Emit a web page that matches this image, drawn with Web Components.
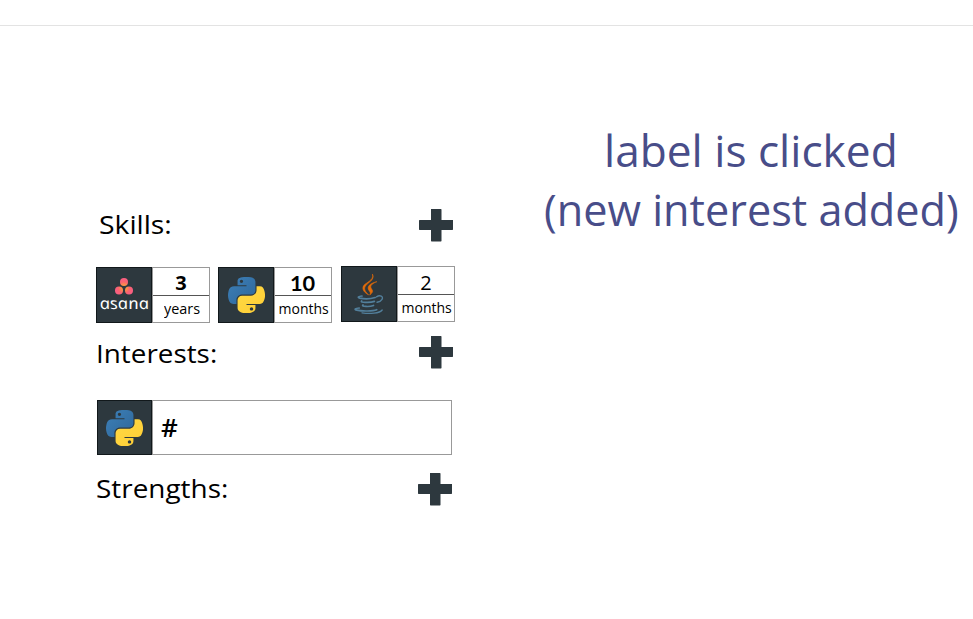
<!DOCTYPE html>
<html lang="en"><head><meta charset="utf-8"><title>Profile labels</title>
<style>
body{margin:0;background:#fff;font-family:"Open Sans","Noto Sans",sans-serif;color:#000}
</style></head><body>
<profile-page></profile-page>
<script>
const define=(name,html,ready)=>{
  const t=document.createElement('template');t.innerHTML=html;
  customElements.define(name,class extends HTMLElement{
    connectedCallback(){
      if(this.shadowRoot)return;
      this.attachShadow({mode:'open'}).append(t.content.cloneNode(true));
      if(ready)ready(this,this.shadowRoot);
    }
  });
};
// Text scaled horizontally so that its advance fills the requested width.
define('fit-text',`<style>:host{display:inline-block;white-space:nowrap}span{display:inline-block;transform-origin:0 70%}</style><span><slot></slot></span>`,(el,r)=>{
  const s=r.querySelector('span'),w=+el.getAttribute('width'),k=el.getAttribute('skew')||0;
  const natural=s.offsetWidth;
  el.style.width=w+'px';
  s.style.transform='scaleX('+w/natural+') skewX('+k+'deg)';
});
define('plus-icon',`<style>:host{display:block;width:34px;height:33px}svg{display:block}</style>
<svg width="34" height="33" viewBox="0 0 34 33" fill="#2d383e"><path d="M12 0h10l.5.5V11H34v9.5l-.5.5H22.5v11l-.5.5H12.5L12 32V21H.5L0 20.5v-9L.5 11H12z"/></svg>`);
define('python-logo',`<style>:host{display:block;width:37px;height:36px}svg{display:block}</style>
<svg width="37" height="36" viewBox="0 0 111 111" preserveAspectRatio="none">
<defs><linearGradient id="b" x2="1" y2="1"><stop stop-color="#3d80b8"/><stop offset="1" stop-color="#2e6699"/></linearGradient><linearGradient id="y" x2="1" y2="1"><stop stop-color="#ffd944"/><stop offset="1" stop-color="#ffce35"/></linearGradient></defs>
<path fill="url(#b)" d="M54.9 0C50.3 0 46 .4 42.1 1.1 30.8 3.1 28.7 7.3 28.7 15v10.25h26.8v3.4H18.6C10.8 28.65 4 33.3 1.9 42.25c-2.5 10.2-2.6 16.6 0 27.25 1.9 7.9 6.4 13.6 14.2 13.6h9.2V70.85c0-8.85 7.7-16.65 16.8-16.65h26.8c7.4 0 13.4-6.15 13.4-13.65V15.03c0-7.26-6.1-12.7-13.4-13.93C64.3.33 59.5 0 54.9 0zM40.4 8.2c2.8 0 5 2.3 5 5.15 0 2.8-2.2 5.1-5 5.1s-5-2.3-5-5.1c0-2.85 2.2-5.15 5-5.15z"/>
<path fill="url(#y)" d="M85.64 28.66v11.9c0 9.23-7.83 17-16.75 17H42.1c-7.33 0-13.4 6.28-13.4 13.63v25.53c0 7.26 6.32 11.54 13.4 13.62 8.5 2.5 16.63 2.95 26.8 0 6.73-1.95 13.4-5.88 13.4-13.62V86.5H55.5v-3.4h40.2c7.8 0 10.7-5.44 13.4-13.6 2.8-8.4 2.68-16.47 0-27.25-1.93-7.75-5.6-13.6-13.4-13.6zM70.58 93.3c2.78 0 5.03 2.28 5.03 5.1 0 2.83-2.25 5.12-5.03 5.12-2.77 0-5.03-2.29-5.03-5.12 0-2.82 2.26-5.1 5.03-5.1z"/></svg>`);
define('asana-logo',`<style>:host{display:flex;flex-direction:column;align-items:center;color:#fff;font:italic 500 16px/16px "Open Sans",sans-serif;padding-bottom:2px}svg{display:block}</style>
<svg width="18" height="17" viewBox="0 0 18 17"><defs><radialGradient id="g" gradientUnits="userSpaceOnUse" cx="9" cy="9.5" r="9"><stop stop-color="#fdad42"/><stop offset=".3" stop-color="#fd9048"/><stop offset=".65" stop-color="#fa6270"/><stop offset="1" stop-color="#f85f82"/></radialGradient></defs><g fill="url(#g)"><circle cx="9" cy="4" r="4"/><circle cx="4" cy="12.4" r="4"/><circle cx="14" cy="12.4" r="4"/></g></svg><fit-text width="49" skew="12">asana</fit-text>`);
define('java-logo',`<style>:host{display:block}svg{display:block}</style>
<svg width="31" height="41" viewBox="0 0 31 41" fill="none" stroke-linecap="round">
<g fill="#e36b09" stroke="#e36b09" stroke-width=".6"><path d="M18.6.5c1.8 3.5-1.2 6.2-4.1 8.5-3.8 3-4.8 5.2-2.9 8.4.7 1.2 1.8 2.3 3 3.5-4-2.2-6.2-4.7-5.6-7.8.9-4.4 11.5-6.1 9.6-12.6z"/><path d="M22.5 7.8c-3.8 1.5-6.7 3.7-5.4 6.3.9 1.8 2.7 3.1.3 5.4L15.7 21c1.3-1.7.5-2.8-.6-4.3-2.8-3.9.8-7.5 7.4-8.9z"/></g>
<g stroke="#527f9b" stroke-width="1.7"><path d="M8 22c-3.3.4-5 1.4-2.3 2.1 4.2.9 11.7.6 15.5-.6"/><path d="M7.7 27c-2.3 1.5 8.1 2.1 12.7.4"/><path d="M9 31c-2.2 1.5 6.1 2.2 10.5.5"/><path stroke-width="1.4" d="M22.5 22.8c3.5-2.2 7.2-.4 5.5 2.5-.9 1.6-3 2.6-4.9 3"/><path d="M5.2 34c-3.9.2-5.5 1.6-2.4 2.2 5.4 1.2 16.4 1.1 19.9-.5"/><path stroke-width="1.3" d="M8 38.9c7.7 1.2 17.7.5 20.2-2.9"/></g></svg>`);
define('icon-tile',`<style>:host{box-sizing:border-box;display:flex;align-items:center;justify-content:center;width:56px;flex:none;background:#2d383e;border:1px solid #11181b}</style><slot></slot>`);
define('skill-card',`<style>
:host{display:flex;box-sizing:border-box;width:114px;height:56px}
.v{flex:1;box-sizing:border-box;border:1px solid #999;display:grid;grid-template-rows:28px 26px;text-align:center}
.n{box-sizing:border-box;border-bottom:1px solid #555;font-size:20px;line-height:var(--count-line,30px);font-weight:var(--weight,700)}
.u{font-size:14px;line-height:25px}
</style><icon-tile><slot name="icon"></slot></icon-tile><div class="v"><div class="n"><slot name="count"></slot></div><div class="u"><slot></slot></div></div>`);
define('section-head',`<style>:host{display:flex;justify-content:space-between;align-items:flex-start;height:34px;font-size:26px;line-height:var(--line,30px)}</style><slot></slot><plus-icon></plus-icon>`);
define('interest-field',`<style>:host{display:flex;box-sizing:border-box;width:355px;height:55px}icon-tile{width:55px}.v{flex:1;box-sizing:border-box;border:1px solid #999;padding-left:8px;font-size:26px;line-height:53px;font-weight:600}</style><icon-tile><python-logo></python-logo></icon-tile><div class="v"><slot></slot></div>`);
define('profile-page',`<style>
:host{display:block;height:619px;box-sizing:border-box;overflow:hidden}
header{height:25px;border-bottom:1px solid #e3e3e3}
main{display:grid;grid-template-columns:359px 1fr;padding-left:96px}
.left{padding-top:183px}
.cards{display:flex;gap:8px;margin-top:24px}
.cards :nth-child(3){--weight:400;--count-line:32px;margin:-1px 0 0 1px}
.s1{padding:0 2px 0 3px}.s2{--line:35px;margin-top:13px;padding:0 2px 0 0}.s3{margin-top:18px;padding:0 3px 0 0}
interest-field{margin:30px 0 0 1px}
.lato{font-family:Lato;margin-right:3px}
h1{margin:95px 0 0 89px;width:420px;color:#484d89;font-size:43px;line-height:59px;font-weight:400;display:flex;flex-direction:column;align-items:flex-start}
.first{margin-left:60px}
</style>
<header></header><main><div class="left">
<section-head class="s1"><fit-text width="73">Skills:</fit-text></section-head>
<div class="cards">
<skill-card><asana-logo slot="icon"></asana-logo><span slot="count">3</span><fit-text width="36">years</fit-text></skill-card>
<skill-card><python-logo slot="icon"></python-logo><fit-text class="lato" slot="count" width="25">10</fit-text><fit-text width="50">months</fit-text></skill-card>
<skill-card><java-logo slot="icon"></java-logo><span slot="count">2</span><fit-text width="50">months</fit-text></skill-card>
</div>
<section-head class="s2"><fit-text width="121">Interests:</fit-text></section-head>
<interest-field>#</interest-field>
<section-head class="s3"><fit-text width="132">Strengths:</fit-text></section-head>
</div><h1><fit-text class="first" width="294">label is clicked</fit-text><fit-text width="415">(new interest added)</fit-text></h1></main>`);
</script></body></html>
